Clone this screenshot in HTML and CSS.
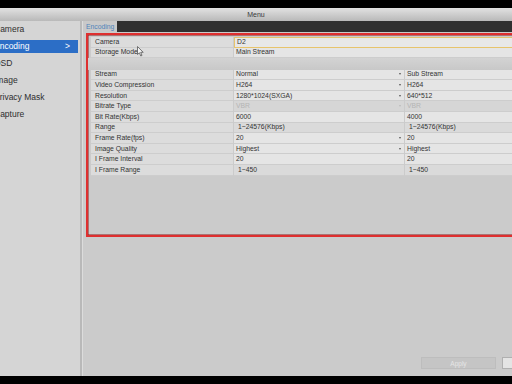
FILE: index.html
```html
<!DOCTYPE html>
<html lang="en">
<head>
    <meta charset="UTF-8">
    <meta name="viewport" content="width=device-width, initial-scale=1.0">
    <title>Menu</title>
    <link rel="stylesheet" href="styles.css">
</head>
<body>
    <div class="screen">
        <div class="band"></div>
        <header class="titlebar">Menu</header>
        <div class="main">
            <ul class="sidebar">
                <li><span>Camera</span></li>
                <li class="active"><span>Encoding<b>&gt;</b></span></li>
                <li><span>OSD</span></li>
                <li><span>Image</span></li>
                <li><span>Privacy Mask</span></li>
                <li><span>Capture</span></li>
            </ul>
            <div class="divider"></div>
            <section class="content">
                <div class="tabs">
                    <span class="tab">Encoding</span>
                    <span class="tab-fill"></span>
                </div>
                <div class="panel">
                    <div class="frame">
                        <div class="grid">
                            <div class="cell label">Camera</div>
                            <div class="cell value wide focus">D2</div>
                            <div class="cell label">Storage Mode</div>
                            <div class="cell value wide">Main Stream</div>
                            <div class="spacer"></div>

                            <div class="cell label">Stream</div>
                            <div class="cell value">Normal<i class="arrow"></i></div>
                            <div class="cell value">Sub Stream</div>

                            <div class="cell label">Video Compression</div>
                            <div class="cell value">H264<i class="arrow"></i></div>
                            <div class="cell value">H264</div>

                            <div class="cell label">Resolution</div>
                            <div class="cell value">1280*1024(SXGA)<i class="arrow"></i></div>
                            <div class="cell value">640*512</div>

                            <div class="cell label">Bitrate Type</div>
                            <div class="cell value off">VBR<i class="arrow"></i></div>
                            <div class="cell value off">VBR</div>

                            <div class="cell label">Bit Rate(Kbps)</div>
                            <div class="cell value">6000</div>
                            <div class="cell value">4000</div>

                            <div class="cell label">Range</div>
                            <div class="cell value ro">1~24576(Kbps)</div>
                            <div class="cell value ro">1~24576(Kbps)</div>

                            <div class="cell label">Frame Rate(fps)</div>
                            <div class="cell value">20<i class="arrow"></i></div>
                            <div class="cell value">20</div>

                            <div class="cell label">Image Quality</div>
                            <div class="cell value">Highest<i class="arrow"></i></div>
                            <div class="cell value">Highest</div>

                            <div class="cell label">I Frame Interval</div>
                            <div class="cell value">20</div>
                            <div class="cell value">20</div>

                            <div class="cell label">I Frame Range</div>
                            <div class="cell value ro">1~450</div>
                            <div class="cell value ro">1~450</div>
                        </div>
                    </div>
                </div>
                <div class="footer">
                    <button class="btn" disabled>Apply</button>
                    <button class="btn btn-light"></button>
                </div>
            </section>
        </div>
        <div class="band"></div>
        <svg class="cursor" width="7" height="11" viewBox="0 0 7 11">
            <path d="M0.5 0.5 L0.5 8.5 L2.4 6.8 L3.8 10 L5 9.4 L3.7 6.3 L6.2 6.3 Z" fill="#f4f4f4" stroke="#555" stroke-width="0.8"/>
        </svg>
    </div>
</body>
</html>
```

FILE: styles.css
```css
* {
    margin: 0;
    padding: 0;
    box-sizing: border-box;
    font-family: "Liberation Sans", Arial, sans-serif;
}
body {
    background-color: #000000;
    overflow: hidden;
}
.screen {
    width: 512px;
    height: 384px;
    display: flex;
    flex-direction: column;
    position: relative;
    overflow: hidden;
}
.band {
    height: 8px;
    background-color: #000000;
}
.titlebar {
    height: 13px;
    line-height: 13px;
    text-align: center;
    font-size: 7px;
    color: #3a3a3a;
    background: linear-gradient(to bottom, #e2e2e2, #c9c9c9 60%, #b9b9b9);
}
.main {
    flex: 1;
    display: flex;
    min-height: 0;
}
.sidebar {
    list-style: none;
    width: 80px;
    background-color: #d5d5d5;
    overflow: hidden;
}
.sidebar li {
    height: 17px;
    padding: 2px 2px 2px 0;
}
.sidebar span {
    height: 13px;
    line-height: 13px;
    display: flex;
    justify-content: space-between;
    font-size: 8.5px;
    color: #2e2e2e;
    text-indent: -6px;
    padding-right: 8px;
    white-space: nowrap;
}
.sidebar .active span {
    background-color: #2c6ec6;
    color: #FFFFFF;
}
.sidebar b {
    font-weight: normal;
    text-indent: 0;
}
.divider {
    width: 3px;
    background: linear-gradient(to right, #b9b9b9 0, #b9b9b9 2px, #dcdcdc 2px);
}
.content {
    flex: 1;
    display: flex;
    flex-direction: column;
    background-color: #cbcbcb;
    overflow: hidden;
}
.tabs {
    height: 11px;
    display: flex;
}
.tab {
    width: 34px;
    background-color: #c9c9c9;
    color: #4f84bb;
    font-size: 6.8px;
    line-height: 12px;
    padding-left: 3px;
}
.tab-fill {
    flex: 1;
    background-color: #303030;
}
.panel {
    flex: 1;
    padding: 1px 0 0 3px;
}
.frame {
    width: 470px;
    height: 204px;
    border: 2px solid #de2f2f;
    box-shadow: inset 0 0 0 0.5px #8c1c1c;
    padding: 2px 0 0 3px;
}
.grid {
    display: grid;
    grid-template-columns: 142px 170px 150px;
    grid-template-rows: 10.6px 10.6px 11.4px repeat(10, 10.6px);
    column-gap: 1px;
    font-size: 6.8px;
    color: #333333;
}
.cell {
    line-height: 10px;
    border-bottom: 1px solid #cdcdcd;
    white-space: nowrap;
    display: flex;
    justify-content: space-between;
    align-items: center;
}
.label {
    background-color: #dcdcdc;
    padding-left: 4px;
}
.value {
    background-color: #e5e5e5;
    padding: 0 3px 0 2px;
}
.wide {
    grid-column: 2 / 4;
}
.focus {
    border: 1px solid #e7c46c;
    background-color: #e8e8e8;
}
.ro {
    background-color: #dadada;
    padding-left: 4px;
}
.off {
    background-color: #d6d6d6;
    color: #b4b4b4;
}
.spacer {
    grid-column: 1 / 4;
    margin-left: -3px;
    background: linear-gradient(to bottom, #d3d3d3, #c8c8c8);
}
.arrow {
    width: 0;
    height: 0;
    border-top: 2.5px solid #555555;
    border-left: 1.5px solid transparent;
    border-right: 1.5px solid transparent;
}
.off .arrow {
    border-top-color: #bbbbbb;
}
.footer {
    height: 19px;
    padding: 0 0 7px 338px;
    display: flex;
    gap: 6px;
}
.btn {
    flex: none;
    width: 75px;
    height: 12px;
    border: 1px solid #bdbdbd;
    background-color: #c5c5c5;
    color: #e6e6e6;
    font-size: 6.5px;
}
.btn-light {
    background-color: #e4e4e4;
    border-color: #b0b0b0;
}
.cursor {
    position: absolute;
    left: 137px;
    top: 46px;
}
```
